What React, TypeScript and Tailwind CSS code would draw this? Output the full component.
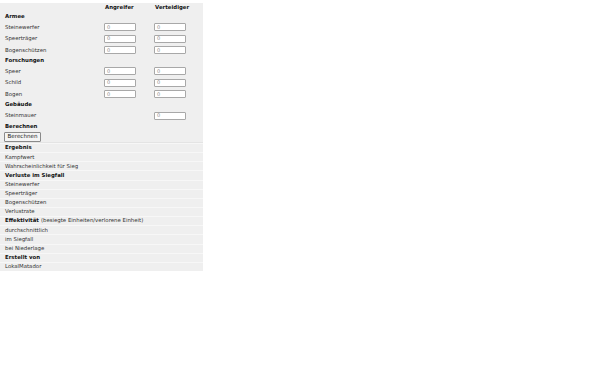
import React from "react";

const font = { fontFamily: '"DejaVu Sans", sans-serif' };

function Inp() {
  return (
    <div className="w-[32px] h-[8px] border border-[#a8a8a8] rounded-[1px] bg-white flex items-center pl-[2px] text-[5px] text-[#888] leading-none">
      0
    </div>
  );
}

function HeadRow({ children, h = "h-[9.5px]" }: { children: React.ReactNode; h?: string }) {
  return (
    <div className={`${h} flex items-center pl-[5px] font-bold text-[#111]`}>{children}</div>
  );
}

function InRow({ label, a = true }: { label: string; a?: boolean }) {
  return (
    <div className="h-[11.5px] flex items-center">
      <div className="w-[104px] pl-[5px] text-[#333]">{label}</div>
      <div className="w-[50px]">{a ? <Inp /> : null}</div>
      <div className="w-[49px]">
        <Inp />
      </div>
    </div>
  );
}

function ResRow({ children, bold = false }: { children: React.ReactNode; bold?: boolean }) {
  return (
    <div
      className={`h-[9.15px] flex items-center pl-[5px] border-t border-[#f7f7f7] ${
        bold ? "font-bold text-[#111]" : "text-[#333]"
      }`}
    >
      {children}
    </div>
  );
}

export default function App() {
  return (
    <div className="w-[600px] h-[375px] bg-white pt-[3px]" style={font}>
      <div className="w-[203px] bg-[#efefef] text-[5.4px] leading-none">
        <div className="h-[9px] flex items-center font-bold text-[#111]">
          <div className="w-[105px]" />
          <div className="w-[50px]">Angreifer</div>
          <div>Verteidiger</div>
        </div>
        <HeadRow>Armee</HeadRow>
        <InRow label="Steinewerfer" />
        <InRow label="Speerträger" />
        <InRow label="Bogenschützen" />
        <HeadRow>Forschungen</HeadRow>
        <InRow label="Speer" />
        <InRow label="Schild" />
        <InRow label="Bogen" />
        <HeadRow h="h-[10px]">Gebäude</HeadRow>
        <InRow label="Steinmauer" a={false} />
        <HeadRow>Berechnen</HeadRow>
        <div className="h-[11px] flex items-center pl-[4px]">
          <div className="h-[10px] w-[37px] border border-[#8a8a8a] rounded-[1px] bg-[#f4f4f4] flex items-center justify-center text-[#222] text-[5.6px]">
            Berechnen
          </div>
        </div>
        <div className="h-[1px] bg-[#e4e4e4]" />
        <ResRow bold>Ergebnis</ResRow>
        <ResRow>Kampfwert</ResRow>
        <ResRow>Wahrscheinlichkeit für Sieg</ResRow>
        <ResRow bold>Verluste im Siegfall</ResRow>
        <ResRow>Steinewerfer</ResRow>
        <ResRow>Speerträger</ResRow>
        <ResRow>Bogenschützen</ResRow>
        <ResRow>Verlustrate</ResRow>
        <ResRow>
          <span className="font-bold text-[#111]">Effektivität</span>
          <span className="ml-[2px]">(besiegte Einheiten/verlorene Einheit)</span>
        </ResRow>
        <ResRow>durchschnittlich</ResRow>
        <ResRow>im Siegfall</ResRow>
        <ResRow>bei Niederlage</ResRow>
        <ResRow bold>Erstellt von</ResRow>
        <ResRow>LokalMatador</ResRow>
      </div>
    </div>
  );
}
